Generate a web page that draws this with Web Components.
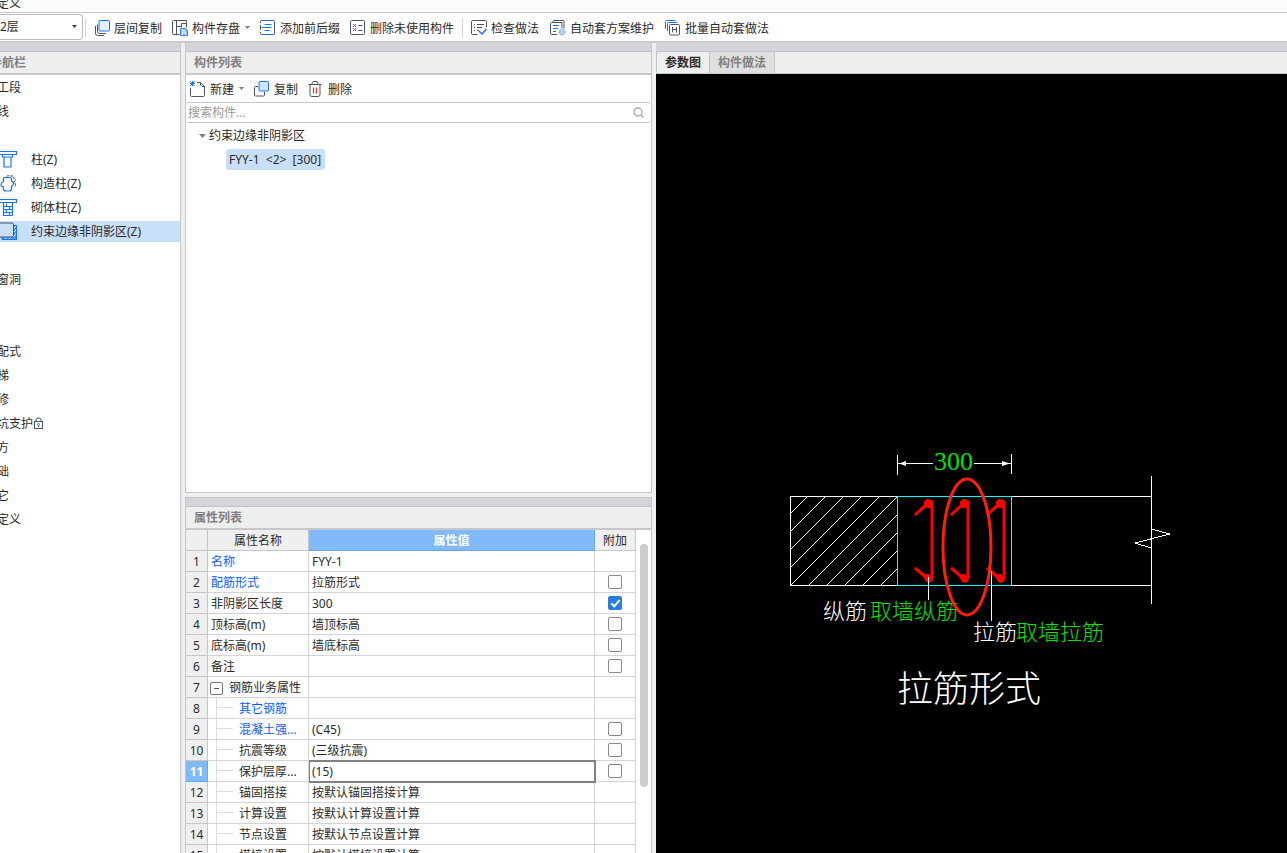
<!DOCTYPE html>
<html lang="zh-CN">
<head>
<meta charset="utf-8">
<title>定义</title>
<style>
html, body { height: 100%; margin: 0; }
body { font: 12px/20px "Noto Sans", "Noto Sans CJK SC", sans-serif; color: #2b2b2b; background: #efefef; overflow: hidden; }
</style>
</head>
<body>
<app-window></app-window>
<script>
const ICONS = {
  layers: '<path d="M1.5 6v7.500q0 2 2 2h6.500" stroke="#4b5568"/><path d="M3.500 4.500v7q0 2 2 2h6.500" stroke="#4b5568"/><rect x="5" y=".5" width="10.500" height="10.500" rx="1" fill="#e3effd" stroke="#1a73e8"/>',
  save: '<path d="M7.500 14.500h-6a1 1 0 0 1-1-1v-12a1 1 0 0 1 1-1h13v7M4.500 .5v14M4.500 6.500h5v-3h5M9.500 6.500v1" stroke="#4b5568"/><path d="M8.500 8.500h5l2 2v5h-7z" fill="#8dbcf5" stroke="#3b82e6"/><path d="M10.500 15v-3h3v3M10 9v1.500h2.500" stroke="#fff"/>',
  affix: '<path d="M.5 3v-1.500a1 1 0 0 1 1-1h12a1 1 0 0 1 1 1v12a1 1 0 0 1-1 1h-12a1 1 0 0 1-1-1v-1.500M.5 5v5" stroke="#4b5568"/><path d="M3 .5h10M4.500 4.500h7M1.500 7.500h10M4.500 10.500h5M3 14.500h10" stroke="#1a73e8"/>',
  unused: '<rect x=".5" y=".5" width="14" height="14" rx="1" stroke="#4b5568"/><path d="M3 4l3 3m0-3l-3 3M3 8l3 3m0-3l-3 3" stroke="#e5323b"/><path d="M8.500 5.500h4M8.500 10.500h4" stroke="#4b5568"/>',
  check: '<path d="M15.500 7v-5.500a1 1 0 0 0-1-1h-13a1 1 0 0 0-1 1v12a1 1 0 0 0 1 1h5M3 4.500h1m2 0h7M3 7.500h1m2 0h5M3 10.500h1m2 0h2" stroke="#4b5568"/><path d="M8 11l3 3 4.500-5" stroke="#1a73e8" stroke-width="1.500"/>',
  scheme: '<path d="M3 2.500v-1q0-1 1-1h9q1 0 1 1v7M7 14.500h-5.500q-1 0-1-1v-10q0-1 1-1h10.500v5.500" stroke="#4b5568"/><path d="M3 5.500h6M3 8.500h5M3 11.500h3" stroke="#1a73e8"/><circle cx="12" cy="12" r="3" fill="#b5d2fa" stroke="#5a9aee" stroke-dasharray="1.5 1"/>',
  batch: '<path d="M.5 9v-7.500q0-1 1-1h9M2.500 11v-7.500q0-1 1-1h9" stroke="#1a73e8"/><rect x="4.500" y="4.500" width="10" height="10.500" rx="1" fill="#fff" stroke="#4b5568"/><path d="M7.500 7v5.500M11.500 7v5.500M7.500 9.500h4" stroke="#4b5568"/>',
  create: '<path d="M7 1.500h3.500l4 4v9a1 1 0 0 1-1 1h-12a1 1 0 0 1-1-1v-7.500M10.500 1.500v2.500l1.500 1.500h2.500" stroke="#4b5568"/><path d="M0 .5l4.500 4.500M4.500.5L0 5M2.500 0v5M0 2.500h5" stroke="#1a73e8"/>',
  copy: '<path d="M4 5.500h-2.500a1 1 0 0 0-1 1v7.500a1 1 0 0 0 1 1h8a1 1 0 0 0 1-1v-3" stroke="#4b5568"/><rect x="5" y=".5" width="9.500" height="9.500" rx="1" fill="#cfe3fc" stroke="#1a73e8"/>',
  trash: '<path d="M.5 3.500h13M4 3.500v-1q0-2 2-2h2q2 0 2 2v1M2 3.500v10q0 2 2 2h6q2 0 2-2v-10" stroke="#4b5568"/><path d="M5.500 6.500v6M8.500 6.500v6" stroke="#e5323b" stroke-width="1.300"/>',
  column: '<path d="M-1 .5h17.500v3h-17.500M2.500 3.500v2.500h1.500v10h7v-10h1.500v-2.500M4 6h7" stroke="#1a73e8" stroke-width="1.200"/>',
  tie: '<path d="M6.500 1.500q1.500-1.500 3-.5h3.500v2q2.500 0 2.500 2.500l-1.500 1.500 1.500 2v3" stroke="#4b5568" stroke-dasharray="3 1"/><path d="M4.500 2.500h5q2 0 2 2v1.500q2 0 2 2.500t-2 2.500v3q0 2-2.500 2h-3q-2.500 0-2.500-2v-2q-2.500-.5-2.500-2.500t2.500-3v-2q-1-1 1-2z" fill="#fff" stroke="#1a73e8" stroke-width="1.200"/>',
  masonry: '<path d="M-1 .5h17.500v3h-17.500M3.500 3.500v13h9v-13M3.500 7.500h9M3.500 10.500h9M3.500 13.500h9M6.500 4.500v3M9.500 7.500v3M6.500 10.500v3M9.500 13.500v3" stroke="#1a73e8" stroke-width="1.200"/>',
  edge: '<path d="M2 16.500h14.500v-14h-4v11h-11z" fill="#4a9af5" stroke="#1a73e8"/><path d="M13 6l3-3m-3 7l3-3m-3 7l3-3m-7 5l2-2m-6 2l2-2" stroke="#e3effd"/><rect x="-2" y="0" width="15.500" height="14" rx="1.500" fill="#c9dff8" stroke="#3d5577"/>',
  lock: '<rect x="1.500" y="3.500" width="8" height="7" stroke="#4b5568"/><path d="M3 3v-1q0-2 2.500-2t2.500 2v1M5.500 7v2" stroke="#4b5568"/><circle cx="5.500" cy="6.500" r="1" stroke="#1a73e8"/>',
  caret: '<path d="M0 6h5L2.500 9z" fill="#7d7d7d"/>',
  caretDark: '<path d="M0 6h5L2.500 9z" fill="#444"/>',
  fold: '<path d="M0 6h7L3.500 10z" fill="#808080"/>',
  search: '<circle cx="5" cy="5" r="4" stroke="#aaa" stroke-width="1.300"/><path d="M8 8l2.500 2.500" stroke="#aaa" stroke-width="1.500"/>'
};
const SIZES = { caret: 5, caretDark: 5, fold: 7, search: 11, lock: 11 };

function define(tag, html, setup) {
  const template = document.createElement('template');
  template.innerHTML = html;
  customElements.define(tag, class extends HTMLElement {
    constructor() {
      super();
      this.attachShadow({ mode: 'open' }).append(template.content.cloneNode(true));
    }
    connectedCallback() { if (setup) setup(this, this.shadowRoot); }
  });
}

define('ui-icon', `<style>:host{display:block;flex:none}svg{display:block;overflow:visible;fill:none}</style><svg height="17"></svg>`, (el, root) => {
  const name = el.getAttribute('name'), svg = root.querySelector('svg');
  const w = SIZES[name] || 17;
  svg.setAttribute('width', w);
  svg.setAttribute('height', name === 'search' || name === 'lock' ? 12 : 17);
  svg.innerHTML = ICONS[name];
});

define('tool-button', `<style>
:host{display:block;flex:none}
button{all:unset;display:flex;align-items:center;height:20px;white-space:nowrap}
.icon{width:20px}.caret{width:5px;margin-left:5px}
</style><button type="button"><slot></slot></button>`, (el, root) => {
  const button = root.querySelector('button');
  button.insertAdjacentHTML('afterbegin', `<ui-icon class="icon" name="${el.getAttribute('icon')}"></ui-icon>`);
  if (el.hasAttribute('menu')) button.insertAdjacentHTML('beforeend', '<ui-icon class="caret" name="caret"></ui-icon>');
});

define('title-strip', `<style>
:host{display:block;height:12px;background:#fcfcfc;border-bottom:1px solid #c8c8cc;overflow:hidden}
span{display:block;margin:-6px 0 0 -3px}
</style><span><slot></slot></span>`);

define('main-toolbar', `<style>
:host{display:flex;align-items:center;height:28px;background:#fff;border-bottom:2px solid #c8c8cd;overflow:hidden}
.floor{position:relative;width:83px;height:26px;margin-right:2px;flex:none}
select{appearance:none;box-sizing:border-box;width:100%;height:100%;border:1px solid #bbb;border-left:0;border-radius:0 4px 4px 0;background:#fff;padding:0;font:inherit;color:inherit}
.floor ui-icon{position:absolute;right:6px;top:5px}
hr{width:1px;height:19px;border:0;margin:0;background:#d5d5d5;flex:none}
.group{display:flex;gap:10px;padding:3px 8px 0}
.wide{gap:11px}
</style>
<div class="floor"><select aria-label="楼层"><option>2层</option></select><ui-icon name="caretDark"></ui-icon></div>
<hr>
<div class="group"><tool-button icon="layers">层间复制</tool-button><tool-button icon="save" menu>构件存盘</tool-button><tool-button icon="affix">添加前后缀</tool-button><tool-button icon="unused">删除未使用构件</tool-button></div>
<hr>
<div class="group wide"><tool-button icon="check">检查做法</tool-button><tool-button icon="scheme">自动套方案维护</tool-button><tool-button icon="batch">批量自动套做法</tool-button></div>`);

define('dock-panel', `<style>
:host{display:flex;flex-direction:column;min-width:0;min-height:0;box-sizing:border-box;border:solid #c6c7cb;border-width:0 1px}
.strip{height:8px;background:#d4d5db;border-bottom:1px solid #c3c4cb;flex:none}
header{height:21px;background:#eee;border-bottom:var(--header-rule,2px) solid #c6c7cb;flex:none;display:flex;align-items:center;font-weight:bold;color:#808080}
main{flex:1;min-height:0;display:flex;flex-direction:column;overflow:hidden;background:#fff}
</style><div class="strip"></div><header><slot name="title"></slot></header><main><slot></slot></main>`);

define('nav-item', `<style>
:host{display:block;height:21px;margin-bottom:3px}
a{display:flex;align-items:center;height:21px;color:inherit;text-decoration:none;white-space:nowrap;margin-left:-3px}
:host([icon]) a{margin-left:0}
:host([icon]) .icon{width:31px}
:host([current]){background:#c8dff9}
</style><a href="#"><slot></slot></a>`, (el, root) => {
  if (el.hasAttribute('icon')) root.querySelector('a').insertAdjacentHTML('afterbegin', `<ui-icon class="icon" name="${el.getAttribute('icon')}"></ui-icon>`);
  if (el.hasAttribute('locked')) root.querySelector('a').insertAdjacentHTML('beforeend', '<ui-icon name="lock"></ui-icon>');
});

define('nav-list', `<style>:host{display:block;padding-top:2px}nav{display:block}</style><nav>
<nav-item>工段</nav-item><nav-item>线</nav-item><nav-item></nav-item>
<nav-item icon="column">柱(Z)</nav-item><nav-item icon="tie">构造柱(Z)</nav-item><nav-item icon="masonry">砌体柱(Z)</nav-item><nav-item icon="edge" current>约束边缘非阴影区(Z)</nav-item>
<nav-item></nav-item><nav-item>窗洞</nav-item><nav-item></nav-item><nav-item></nav-item>
<nav-item>配式</nav-item><nav-item>梯</nav-item><nav-item>修</nav-item><nav-item locked>坑支护</nav-item><nav-item>方</nav-item><nav-item>础</nav-item><nav-item>它</nav-item><nav-item>定义</nav-item></nav>`);

define('component-list', `<style>
:host{display:flex;flex-direction:column;flex:1;min-height:0}
.tools{display:flex;align-items:center;gap:10px;height:27px;padding:2px 4px 0;box-sizing:border-box}
.search{display:flex;align-items:center;height:19px;border:solid #c8c8c8;border-width:1px 0;border-radius:3px;padding-right:7px}
input{all:unset;flex:1;padding-left:2px;height:19px;line-height:19px}
input::placeholder{color:#999}
ul{list-style:none;margin:0;padding:0}
.tree{padding:3px 0 0 13px}
.branch{display:flex;align-items:center;gap:3px;height:20px}
.leaf{margin:3px 0 0 27px}
.leaf span{display:inline-block;height:21px;line-height:21px;padding:0 4px 0 3px;background:#c8dff9;border-radius:3px;white-space:pre}
</style>
<div class="tools"><tool-button icon="create" menu>新建</tool-button><tool-button icon="copy">复制</tool-button><tool-button icon="trash">删除</tool-button></div>
<div class="search"><input type="text" aria-label="搜索构件" placeholder="搜索构件..."><ui-icon name="search"></ui-icon></div>
<ul class="tree"><li><div class="branch"><ui-icon name="fold"></ui-icon>约束边缘非阴影区</div><ul><li class="leaf"><span>FYY-1  &lt;2&gt;  [300]</span></li></ul></li></ul>`);

const ROWS = [
  ['名称', 'FYY-1', '', 'key'], ['配筋形式', '拉筋形式', 'box', 'key'], ['非阴影区长度', '300', 'on', ''],
  ['顶标高(m)', '墙顶标高', 'box', ''], ['底标高(m)', '墙底标高', 'box', ''], ['备注', '', 'box', ''],
  ['钢筋业务属性', '', '', 'group'], ['其它钢筋', '', '', 'key child'], ['混凝土强...', '(C45)', 'box', 'key child'],
  ['抗震等级', '(三级抗震)', 'box', 'child'], ['保护层厚...', '(15)', 'box', 'child active'],
  ['锚固搭接', '按默认锚固搭接计算', '', 'child'], ['计算设置', '按默认计算设置计算', '', 'child'],
  ['节点设置', '按默认节点设置计算', '', 'child'], ['搭接设置', '按默认搭接设置计算', '', 'child']
];
define('property-table', `<style>
:host{display:flex;flex:1;min-height:0;overflow:hidden}
table{flex:1;table-layout:fixed;border-collapse:separate;border-spacing:0;width:0}
th,td{box-sizing:border-box;height:21px;line-height:18px;padding:2px 0 0 3px;border:solid #d4d4d4;border-width:0 1px 1px 0;font-weight:normal;text-align:left;white-space:nowrap;overflow:hidden}
thead th{background:#efefef;text-align:center;padding:2px 0 0;border-color:#c6c7cb}
thead .value{background:#80bafa;color:#fff;font-weight:bold;border-color:#6ba6e8}
tbody th{background:#efefef;text-align:center;padding:2px 0 0;border-color:#c6c7cb}
.key .name{color:#0a5cff}
.name{position:relative}
.child .name{padding-left:31px}
.child .name::before{content:"";position:absolute;left:8px;top:0;height:21px;border-left:1px solid #ddd}
.child .name::after{content:"";position:absolute;left:8px;top:9px;width:17px;border-top:1px solid #ddd}
.group .name{padding-left:2px}
.group button{box-sizing:border-box;width:13px;height:13px;padding:0;border:1px solid #777;border-radius:2px;background:linear-gradient(#555,#555) center/5px 1px no-repeat #fff;vertical-align:-2px;margin-right:6px}
.active th{background:#80bafa;color:#fff;font-weight:bold;border-color:#6ba6e8}
.active .val{outline:2px solid #808080;outline-offset:-1px}
td.extra{text-align:center;padding:0}
input{appearance:none;display:block;box-sizing:border-box;width:14px;height:14px;margin:0 auto;border:1px solid #888;border-radius:2px;background:#fff}
input:checked{border-color:#2a7de1;background:#2a7de1}
input:checked::after{content:"";display:block;box-sizing:border-box;width:9px;height:5px;margin:3px 0 0 2px;border:solid #fff;border-width:0 0 2px 2px;transform:rotate(-48deg)}
.scroll{width:15px;flex:none}
.thumb{width:8px;height:243px;margin:14px 0 0 4px;background:#ccc;border-radius:4px}
</style>
<table><colgroup><col style="width:22px"><col style="width:101px"><col><col style="width:41px"></colgroup>
<thead><tr><th></th><th>属性名称</th><th class="value">属性值</th><th>附加</th></tr></thead><tbody></tbody></table>
<div class="scroll"><div class="thumb"></div></div>`, (el, root) => {
  root.querySelector('tbody').innerHTML = ROWS.map(([name, value, box, kind], i) => `<tr class="${kind}"><th scope="row">${i + 1}</th><td class="name">${kind === 'group' ? '<button type="button" aria-label="折叠"></button>' : ''}${name}</td><td class="val">${value}</td><td class="extra">${box ? `<input type="checkbox" aria-label="附加 ${name}"${box === 'on' ? ' checked' : ''}>` : ''}</td></tr>`).join('');
});

define('view-tabs', `<style>
:host{display:flex;height:21px}
button{all:unset;box-sizing:border-box;height:21px;line-height:21px;padding:0 8px;border-right:1px solid #c3c4cb;color:#808080;background:#e0e0e0}
button[aria-selected=true]{background:#eee;color:#2b2b2b;border-left:1px solid #c3c4cb}
</style><button role="tab" aria-selected="true">参数图</button><button role="tab" aria-selected="false">构件做法</button>`);

define('param-drawing', `<style>
:host{display:block;flex:1;min-height:0;background:#000}
svg{display:block;width:100%;height:100%;fill:none}
text{font-family:"Liberation Serif","Noto Sans CJK SC",serif;font-weight:300;font-size:22px;fill:#fff}
.g{fill:#00e600}
.dim{font-size:26px}.title{font-size:36px}
</style>
<svg viewBox="656 74 631 779">
<defs><g id="bar"><path d="M0 76.500V8q0-4-4-5L-17 15M0 76.500q0 3-4 2.500l-13-11" stroke="#f00" stroke-width="3"/><path d="M-8 3q2-5 6-3 4 0 3 5-3 4-7 2zM-8 77q3-5 6-1 3 3 2 5-4 3-6 0z" fill="#f00" stroke="#f00"/></g></defs>
<g stroke="#fff" shape-rendering="crispEdges">
<path d="M897.500 496.500h-107v89h107M1011.500 496.500h140M1011.500 585.500h140M1151.500 476v128"/>
<path d="M790 514l18-18M790 532l36-36M790 550l54-54M790 568l72-72M791 585l89-89M809 585l88-88M827 585l70-70M845 585l52-52M863 585l34-34M881 585l16-16"/>
<path d="M1151 529l19 5-35 9 16 5"/>
<path d="M897.500 455v20M1011.500 454v20M898 463.500h35M974 463.500h37"/>
</g>
<path d="M899 463.500l7-2.500v5zM1010 463.500l-8-2.500v5z" fill="#fff"/>
<path d="M897.500 496.500h114v89h-114z" stroke="#0ff" shape-rendering="crispEdges"/>
<use href="#bar" x="932" y="500"/><use href="#bar" x="968" y="500"/><use href="#bar" x="1004" y="500"/>
<path d="M928.500 577v23M991.500 571v50" stroke="#fff"/>
<text class="g dim" x="934" y="470">300</text>
<text x="823" y="619">纵筋</text><text class="g" x="870" y="619">取墙纵筋</text>
<text x="973" y="640">拉筋</text><text class="g" x="1016" y="640">取墙拉筋</text>
<text class="title" x="897" y="702">拉筋形式</text>
<ellipse cx="967" cy="547" rx="24" ry="68" stroke="#ff1e10" stroke-width="3"/>
</svg>`);

define('app-window', `<style>
:host{display:flex;flex-direction:column;height:100vh}
.body{flex:1;min-height:0;display:grid;grid-template-columns:181px 467px minmax(0,1fr);gap:4px}
.left{border-left:0}
.middle{display:grid;grid-template-rows:450px minmax(0,1fr);gap:4px;min-height:0}
.upper{border-bottom:1px solid #c6c7cb}.lower{border-top:1px solid #c6c7cb}
.view{border:0;--header-rule:1px}
.nav-title{margin-left:-10px}.title{margin-left:8px}
</style>
<title-strip>定义</title-strip><main-toolbar></main-toolbar>
<div class="body">
<dock-panel class="left"><span slot="title" class="nav-title">导航栏</span><nav-list></nav-list></dock-panel>
<div class="middle">
<dock-panel class="upper"><span slot="title" class="title">构件列表</span><component-list></component-list></dock-panel>
<dock-panel class="lower"><span slot="title" class="title">属性列表</span><property-table></property-table></dock-panel>
</div>
<dock-panel class="view"><view-tabs slot="title"></view-tabs><param-drawing></param-drawing></dock-panel>
</div>`);
</script>
</body>
</html>
